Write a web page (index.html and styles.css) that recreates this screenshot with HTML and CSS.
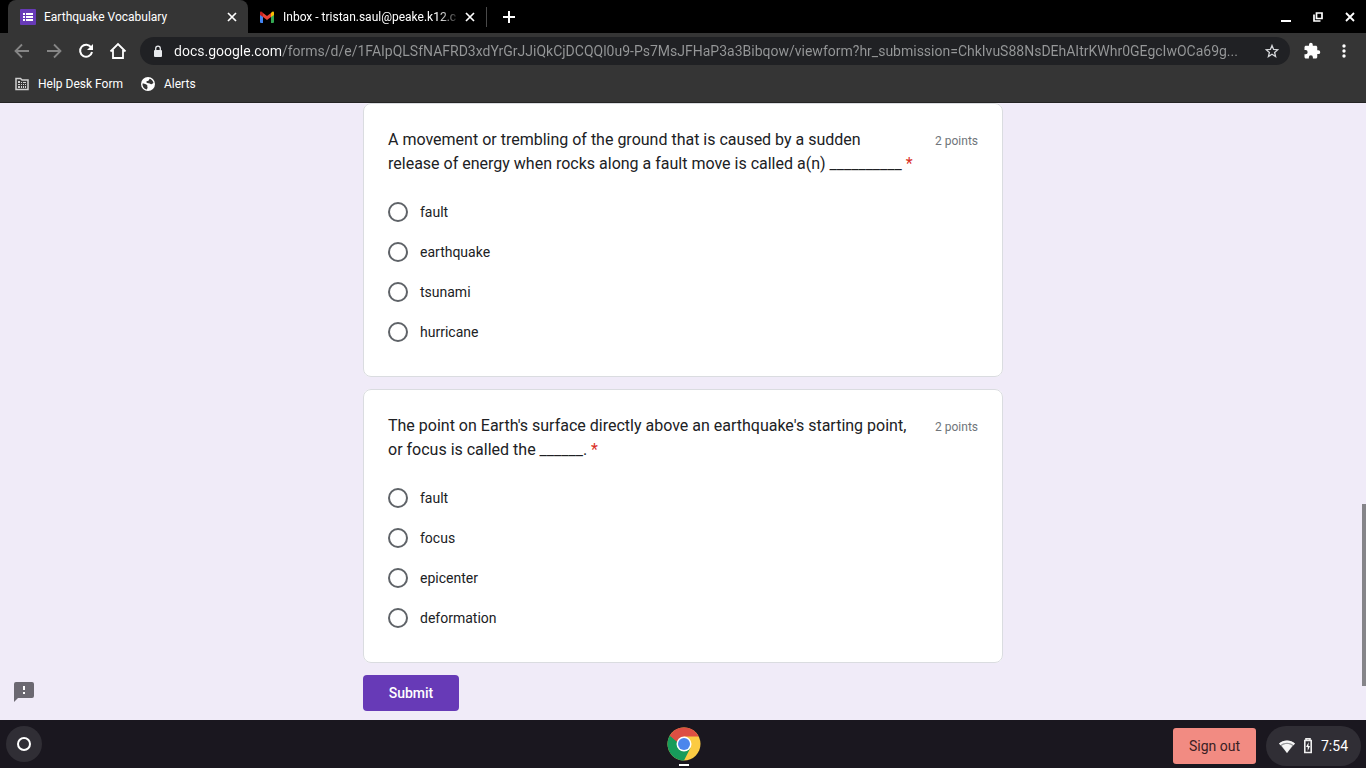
FILE: index.html
```html
<!DOCTYPE html>
<html lang="en">
<head>
<meta charset="UTF-8">
<title>Earthquake Vocabulary</title>
<link rel="stylesheet" href="styles.css">
</head>
<body>
    <header class="browser">
        <div class="tabstrip">
            <div class="tab active">
                <svg class="favicon" viewBox="0 0 16 16"><rect width="16" height="16" rx="1" fill="#673ab7"/><path fill="#fff" d="M3 4h2v2H3zM3 7h2v2H3zM3 10h2v2H3zM6 4h7v2H6zM6 7h7v2H6zM6 10h7v2H6z"/></svg>
                <span class="tab-title">Earthquake Vocabulary</span>
                <button type="button" class="icon-button close" aria-label="Close tab"><svg width="10" height="10" viewBox="0 0 10 10"><path d="M1 1l8 8M9 1l-8 8" stroke="#fff" stroke-width="1.7"/></svg></button>
            </div>
            <div class="tab">
                <svg class="favicon" viewBox="0 0 16 16"><path fill="#4285f4" d="M1 4l3 2v8H2a1 1 0 0 1-1-1z"/><path fill="#34a853" d="M15 4l-3 2v8h2a1 1 0 0 0 1-1z"/><path fill="#ea4335" d="M4 4l4 3 4-3v4l-4 3-4-3z"/><path fill="#c5221f" d="M1 4c0-2 1.500-2 3 0v4L1 6z"/><path fill="#fbbc04" d="M15 4c0-2-1.500-2-3 0v4l3-2z"/></svg>
                <span class="tab-title fade">Inbox - tristan.saul@peake.k12.c</span>
                <button type="button" class="icon-button close" aria-label="Close tab"><svg width="10" height="10" viewBox="0 0 10 10"><path d="M1 1l8 8M9 1l-8 8" stroke="#fff" stroke-width="1.7"/></svg></button>
            </div>
            <div class="divider"></div>
            <button type="button" class="icon-button new-tab" aria-label="New tab"><svg width="12" height="12" viewBox="0 0 12 12"><path d="M6 0v12M0 6h12" stroke="#fff" stroke-width="2"/></svg></button>
            <div class="window-buttons">
                <button type="button" class="icon-button" aria-label="Minimize"><svg width="12" height="12" viewBox="0 0 12 12"><path d="M1 10h10" stroke="#fff" stroke-width="2"/></svg></button>
                <button type="button" class="icon-button" aria-label="Restore"><svg width="12" height="12" viewBox="0 0 12 12"><path d="M4.500 2h5.500v5.500H4.500zM2 3.500V10h6.500" fill="none" stroke="#fff" stroke-width="1.7"/></svg></button>
                <button type="button" class="icon-button" aria-label="Close"><svg width="12" height="12" viewBox="0 0 12 12"><path d="M2 2l8 8M10 2l-8 8" stroke="#fff" stroke-width="1.800"/></svg></button>
            </div>
        </div>
        <div class="toolbar">
            <button type="button" class="icon-button" aria-label="Back"><svg width="16" height="16" viewBox="0 0 16 16"><path d="M15 8H2M8 1.500L1.500 8 8 14.500" fill="none" stroke="#868686" stroke-width="1.800"/></svg></button>
            <button type="button" class="icon-button" aria-label="Forward"><svg width="16" height="16" viewBox="0 0 16 16"><path d="M1 8h13M8 1.500L14.500 8 8 14.500" fill="none" stroke="#868686" stroke-width="1.800"/></svg></button>
            <button type="button" class="icon-button" aria-label="Reload"><svg width="16" height="16" viewBox="0 0 16 16"><path d="M13.200 4.500A6 6 0 1 0 14 9" fill="none" stroke="#fff" stroke-width="2"/><path d="M15 1v6H9z" fill="#fff"/></svg></button>
            <button type="button" class="icon-button" aria-label="Home"><svg width="18" height="18" viewBox="0 0 18 18"><path d="M4 8v8h3.500M10.500 16H14V8M1.500 9.500L9 2l7.500 7.500M4 16h10" fill="none" stroke="#fff" stroke-width="1.800"/></svg></button>
            <div class="omnibox">
                <svg width="10" height="13" viewBox="0 0 10 13"><rect x="1" y="5" width="8" height="7" rx="1" fill="#e8eaed"/><path d="M2.700 5V3.500a2.300 2.300 0 0 1 4.600 0V5" fill="none" stroke="#e8eaed" stroke-width="1.300"/></svg>
                <input type="text" class="address" aria-label="Address" value="docs.google.com/forms/d/e/1FAIpQLSfNAFRD3xdYrGrJJiQkCjDCQQl0u9-Ps7MsJFHaP3a3Bibqow/viewform?hr_submission=ChkIvuS88NsDEhAItrKWhr0GEgcIwOCa69g...">
                <button type="button" class="icon-button star" aria-label="Bookmark this page"><svg width="14" height="14" viewBox="0 0 14 14"><path d="M7 1.500l1.600 3.900 4.200.300-3.200 2.700 1 4.100L7 10.300l-3.600 2.200 1-4.100L1.200 5.700l4.200-.3z" fill="none" stroke="#d5d7da" stroke-width="1.300"/></svg></button>
            </div>
            <button type="button" class="icon-button" aria-label="Extensions"><svg width="18" height="18" viewBox="0 0 24 24"><path fill="#fff" d="M20.500 11H19V7c0-1.100-.9-2-2-2h-4V3.500a2.500 2.500 0 0 0-5 0V5H4c-1.100 0-2 .9-2 2v3.800h1.500a2.700 2.700 0 0 1 0 5.400H2V20c0 1.100.9 2 2 2h3.800v-1.500a2.700 2.700 0 0 1 5.400 0V22H17c1.100 0 2-.9 2-2v-4h1.500a2.500 2.500 0 0 0 0-5z"/></svg></button>
            <button type="button" class="icon-button" aria-label="Menu"><svg width="16" height="16" viewBox="0 0 16 16" fill="#fff"><circle cx="8" cy="3" r="1.700"/><circle cx="8" cy="8" r="1.700"/><circle cx="8" cy="13" r="1.700"/></svg></button>
        </div>
        <nav class="bookmarks">
            <a href="#"><svg width="14" height="14" viewBox="0 0 14 14"><path d="M1 1.500h4.500L7 3h6v9.500H1z" fill="none" stroke="#d0d0d0" stroke-width="1.500"/><path fill="#d0d0d0" d="M3 4h2v2H3zM3 7h2v1H3zM3 9h2v2H3zM6 5h1v1H6zM6 7h1v1H6zM6 9h1v2H6zM8 5h3v1H8zM8 7h1v1H8zM10 7h1v1h-1zM8 9h1v2H8zM10 9h1v2h-1z"/></svg>Help Desk Form</a>
            <a href="#"><svg width="14" height="14" viewBox="0 0 14 14"><circle cx="7" cy="7" r="7" fill="#fff"/><path fill="#353535" d="M1.500 6.500c2 0 3 .5 4.500 1.500.8.600 0 1.500.5 2.200.4.600-.5 1.300-.5 2.200C3 12 1.300 9.500 1.500 6.500zM8.500 1.700c2 .6 3.500 2 4 4.300-1 .3-1.300 1.500-2.500 1.200C9.200 7 9 6 7.500 6.200 6.300 6.300 5 5.800 5.500 4.500c.3-.8 1.800-.3 2.200-1 .3-.6.500-1.200.8-1.800z"/></svg>Alerts</a>
        </nav>
    </header>

    <main class="page">
        <form class="quiz">
            <fieldset class="card">
                <div class="question">
                    <p id="q1">A movement or trembling of the ground that is caused by a sudden<br>release of energy when rocks along a fault move is called a(n) __________ <span class="required">*</span></p>
                    <span class="points">2 points</span>
                </div>
                <div class="options" role="radiogroup" aria-labelledby="q1">
                    <label><input type="radio" name="q1" value="fault">fault</label>
                    <label><input type="radio" name="q1" value="earthquake">earthquake</label>
                    <label><input type="radio" name="q1" value="tsunami">tsunami</label>
                    <label><input type="radio" name="q1" value="hurricane">hurricane</label>
                </div>
            </fieldset>
            <fieldset class="card">
                <div class="question">
                    <p id="q2">The point on Earth's surface directly above an earthquake's starting point,<br>or focus is called the ______. <span class="required">*</span></p>
                    <span class="points">2 points</span>
                </div>
                <div class="options" role="radiogroup" aria-labelledby="q2">
                    <label><input type="radio" name="q2" value="fault">fault</label>
                    <label><input type="radio" name="q2" value="focus">focus</label>
                    <label><input type="radio" name="q2" value="epicenter">epicenter</label>
                    <label><input type="radio" name="q2" value="deformation">deformation</label>
                </div>
            </fieldset>
            <button type="submit" class="submit">Submit</button>
        </form>
        <button type="button" class="icon-button report" aria-label="Report a problem"><svg width="20" height="20" viewBox="0 0 20 20"><path fill="#6b6871" d="M2 0h16a2 2 0 0 1 2 2v12a2 2 0 0 1-2 2H4l-4 4V2a2 2 0 0 1 2-2z"/><path fill="#fff" d="M9 4h2v4H9zM9 10h2v2H9z"/></svg></button>
        <div class="scrollbar"></div>
    </main>

    <footer class="shelf">
        <button type="button" class="icon-button launcher" aria-label="Launcher"><svg width="16" height="16" viewBox="0 0 16 16"><circle cx="8" cy="8" r="6" fill="none" stroke="#fff" stroke-width="2"/></svg></button>
        <button type="button" class="icon-button chrome" aria-label="Chrome">
            <svg width="34" height="34" viewBox="0 0 34 34"><circle cx="17" cy="17" r="16.500" fill="#fbcb43"/><path fill="#dd4f43" d="M2.700 8.800A16.500 16.500 0 0 1 31.300 8.800L31.500 9.500H17L10.500 20.800z"/><path fill="#179c5b" d="M2.700 8.800A16.500 16.500 0 0 0 17 33.500L23.500 20.800H17z"/><path fill="#179c5b" d="M2.700 8.800L10.500 20.800 17 17v7z"/><circle cx="17" cy="17" r="7.500" fill="#fff"/><circle cx="17" cy="17" r="6" fill="#4c86ec"/></svg>
        </button>
        <div class="tray">
            <button type="button" class="sign-out">Sign out</button>
            <button type="button" class="status">
                <svg width="16" height="13" viewBox="0 0 16 13"><path d="M0 3.500C4.500-.6 11.500-.6 16 3.500L8 13z" fill="#97989b"/><path d="M0 3.500C4.500-.6 11.500-.6 16 3.500l-1.500 1.700c-3.600-3.200-9.400-3.200-13 0zM2.700 5.800C5.700 3.500 10.300 3.500 13.300 5.800L8 13z" fill="#f5f5f5"/></svg>
                <svg width="10" height="16" viewBox="0 0 10 16"><path d="M3 2V.8h4V2M1.800 2.500h6.400v12H1.800z" fill="none" stroke="#f0f0f0" stroke-width="1.600"/><path d="M5.700 4L3 9h1.700v4L7 8H5.400z" fill="#fff"/></svg>
                <span>7:54</span>
            </button>
        </div>
    </footer>
</body>
</html>
```

FILE: styles.css
```css
* {
    box-sizing: border-box;
}
body {
    margin: 0;
    height: 100vh;
    display: flex;
    flex-direction: column;
    overflow: hidden;
    font-family: Roboto, Arial, sans-serif;
    font-size: 14px;
    color: #202124;
}
button, input {
    font-family: inherit;
}
svg {
    display: block;
    flex: none;
}
.icon-button {
    display: flex;
    align-items: center;
    justify-content: center;
    width: 32px;
    height: 32px;
    padding: 0;
    border: none;
    background: none;
    flex: none;
    cursor: pointer;
}

/* browser window */
.browser {
    background-color: #353535;
    color: #fff;
    border-bottom: 1px solid #242424;
    font-size: 12px;
}
.tabstrip {
    display: flex;
    align-items: center;
    height: 33px;
    padding-left: 8px;
    background-color: #000;
}
.tab {
    display: flex;
    align-items: center;
    gap: 8px;
    width: 238px;
    height: 33px;
    padding: 0 10px 0 11px;
}
.tab.active {
    width: 240px;
    padding-left: 12px;
    background-color: #353535;
    border-radius: 8px 8px 0 0;
}
.favicon {
    width: 16px;
    height: 16px;
    flex: none;
}
.tab-title {
    flex: 1;
    white-space: nowrap;
    overflow: hidden;
}
.fade {
    -webkit-mask-image: linear-gradient(90deg, #000 88%, transparent);
    mask-image: linear-gradient(90deg, #000 88%, transparent);
}
.close {
    width: 12px;
    height: 16px;
    margin-left: -4px;
}
.divider {
    width: 1px;
    height: 20px;
    background-color: #494949;
}
.new-tab {
    width: 44px;
}
.window-buttons {
    display: flex;
    margin-left: auto;
}
.toolbar {
    display: flex;
    align-items: center;
    height: 36px;
    padding: 0 6px;
}
.omnibox {
    flex: 1;
    display: flex;
    align-items: center;
    gap: 11px;
    min-width: 0;
    height: 28px;
    margin: 0 6px;
    padding: 0 2px 0 13px;
    border-radius: 14px;
    background-color: #202124;
}
.address {
    flex: 1;
    min-width: 0;
    padding: 0;
    border: none;
    outline: none;
    font-size: 14px;
    color: transparent;
    background: linear-gradient(90deg, #fff 107px, #969899 107px);
    -webkit-background-clip: text;
    background-clip: text;
}
.omnibox .star {
    margin-left: -11px;
}
.bookmarks {
    display: flex;
    align-items: center;
    gap: 18px;
    height: 33px;
    padding: 0 15px 3px;
}
.bookmarks a {
    display: flex;
    align-items: center;
    gap: 9px;
    color: #fff;
    text-decoration: none;
}

/* form */
.page {
    flex: 1;
    min-height: 0;
    position: relative;
    overflow: hidden;
    background-color: #f0ebf8;
}
.quiz {
    display: flex;
    flex-direction: column;
    align-items: flex-start;
    gap: 12px;
    max-width: 640px;
    margin: 0 auto;
}
.card {
    width: 100%;
    margin: 0;
    padding: 24px;
    border: 1px solid #dadce0;
    border-radius: 8px;
    background-color: #fff;
}
.question {
    display: flex;
    justify-content: space-between;
    gap: 12px;
    margin-bottom: 16px;
}
.question p {
    margin: 0;
    font-size: 16px;
    line-height: 24px;
}
.required {
    color: #d93025;
}
.points {
    flex: none;
    font-size: 12px;
    line-height: 26px;
    color: #70757a;
}
.options label {
    display: flex;
    align-items: center;
    gap: 12px;
    height: 40px;
}
.options input {
    appearance: none;
    width: 20px;
    height: 20px;
    margin: 0;
    border: 2px solid #5f6368;
    border-radius: 50%;
}
.options input:checked {
    border: 6px solid #673ab7;
}
.submit {
    min-width: 96px;
    height: 36px;
    padding: 0 24px;
    border: none;
    border-radius: 4px;
    background-color: #673ab7;
    color: #fff;
    font-size: 14px;
    font-weight: 500;
    cursor: pointer;
}
.report {
    position: absolute;
    left: 8px;
    bottom: 12px;
}
.scrollbar {
    position: absolute;
    right: 0;
    bottom: 34px;
    width: 4px;
    height: 182px;
    background-color: #858489;
}

/* shelf */
.shelf {
    display: grid;
    grid-template-columns: 1fr auto 1fr;
    align-items: center;
    height: 48px;
    padding: 0 5px 0 6px;
    background-color: #1a171f;
}
.launcher {
    width: 36px;
    height: 36px;
    border-radius: 50%;
    background-color: #302e35;
}
.chrome {
    position: relative;
    width: 36px;
    height: 48px;
}
.chrome::after {
    content: "";
    position: absolute;
    left: 13px;
    bottom: 2px;
    width: 10px;
    height: 2px;
    background-color: #fff;
}
.tray {
    display: flex;
    align-items: center;
    justify-content: flex-end;
    gap: 10px;
}
.sign-out {
    height: 36px;
    padding: 0 16px;
    margin-top: 4px;
    border: none;
    border-radius: 3px;
    background-color: #f28b82;
    color: #3a2024;
    font-size: 14px;
    cursor: pointer;
}
.status {
    display: flex;
    align-items: center;
    gap: 8px;
    height: 40px;
    margin-top: 4px;
    padding: 0 13px;
    border: none;
    border-radius: 20px;
    background-color: #302e35;
    color: #fff;
    font-size: 14px;
}
```
